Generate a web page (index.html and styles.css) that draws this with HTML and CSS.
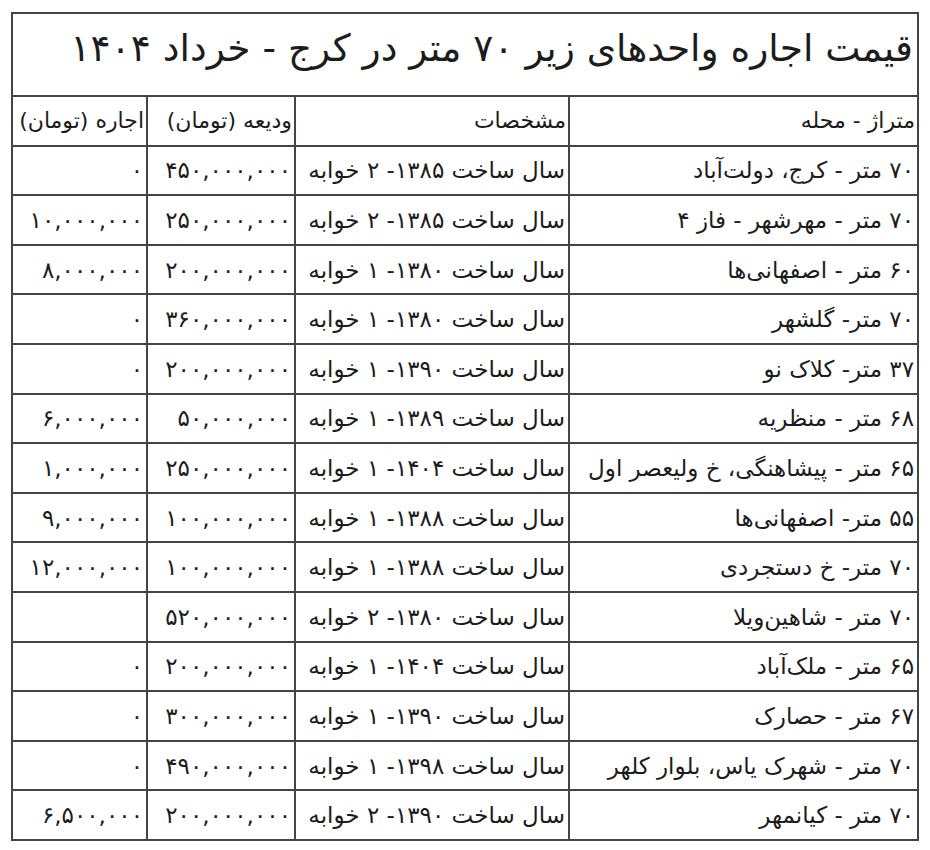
FILE: index.html
```html
<!DOCTYPE html>
<html lang="fa" dir="rtl">
<head>
<meta charset="utf-8">
<link rel="stylesheet" href="styles.css">
</head>
<body>
<table class="price-table">
  <colgroup>
    <col class="c-area">
    <col class="c-spec">
    <col class="c-dep">
    <col class="c-rent">
  </colgroup>
  <tr class="title-row"><td colspan="4" class="title">قیمت اجاره واحدهای زیر ۷۰ متر در کرج - خرداد ۱۴۰۴</td></tr>
  <tr class="head-row"><td>متراژ - محله</td><td>مشخصات</td><td>ودیعه (تومان)</td><td>اجاره (تومان)</td></tr>
  <tr><td>۷۰ متر - کرج، دولت‌آباد</td><td>سال ساخت ۱۳۸۵- ۲ خوابه</td><td>۴۵۰,۰۰۰,۰۰۰</td><td>۰</td></tr>
  <tr><td>۷۰ متر - مهرشهر - فاز ۴</td><td>سال ساخت ۱۳۸۵- ۲ خوابه</td><td>۲۵۰,۰۰۰,۰۰۰</td><td>۱۰,۰۰۰,۰۰۰</td></tr>
  <tr><td>۶۰ متر - اصفهانی‌ها</td><td>سال ساخت ۱۳۸۰- ۱ خوابه</td><td>۲۰۰,۰۰۰,۰۰۰</td><td>۸,۰۰۰,۰۰۰</td></tr>
  <tr><td>۷۰ متر- گلشهر</td><td>سال ساخت ۱۳۸۰- ۱ خوابه</td><td>۳۶۰,۰۰۰,۰۰۰</td><td>۰</td></tr>
  <tr><td>۳۷ متر- کلاک نو</td><td>سال ساخت ۱۳۹۰- ۱ خوابه</td><td>۲۰۰,۰۰۰,۰۰۰</td><td>۰</td></tr>
  <tr><td>۶۸ متر - منظریه</td><td>سال ساخت ۱۳۸۹- ۱ خوابه</td><td>۵۰,۰۰۰,۰۰۰</td><td>۶,۰۰۰,۰۰۰</td></tr>
  <tr><td>۶۵ متر - پیشاهنگی، خ ولیعصر اول</td><td>سال ساخت ۱۴۰۴- ۱ خوابه</td><td>۲۵۰,۰۰۰,۰۰۰</td><td>۱,۰۰۰,۰۰۰</td></tr>
  <tr><td>۵۵ متر- اصفهانی‌ها</td><td>سال ساخت ۱۳۸۸- ۱ خوابه</td><td>۱۰۰,۰۰۰,۰۰۰</td><td>۹,۰۰۰,۰۰۰</td></tr>
  <tr><td>۷۰ متر- خ دستجردی</td><td>سال ساخت ۱۳۸۸- ۱ خوابه</td><td>۱۰۰,۰۰۰,۰۰۰</td><td>۱۲,۰۰۰,۰۰۰</td></tr>
  <tr><td>۷۰ متر - شاهین‌ویلا</td><td>سال ساخت ۱۳۸۰- ۲ خوابه</td><td>۵۲۰,۰۰۰,۰۰۰</td><td></td></tr>
  <tr><td>۶۵ متر - ملک‌آباد</td><td>سال ساخت ۱۴۰۴- ۱ خوابه</td><td>۲۰۰,۰۰۰,۰۰۰</td><td>۰</td></tr>
  <tr><td>۶۷ متر - حصارک</td><td>سال ساخت ۱۳۹۰- ۱ خوابه</td><td>۳۰۰,۰۰۰,۰۰۰</td><td>۰</td></tr>
  <tr><td>۷۰ متر - شهرک یاس، بلوار کلهر</td><td>سال ساخت ۱۳۹۸- ۱ خوابه</td><td>۴۹۰,۰۰۰,۰۰۰</td><td>۰</td></tr>
  <tr><td>۷۰ متر - کیانمهر</td><td>سال ساخت ۱۳۹۰- ۲ خوابه</td><td>۲۰۰,۰۰۰,۰۰۰</td><td>۶,۵۰۰,۰۰۰</td></tr>
</table>
</body>
</html>
```
FILE: styles.css
```css
html, body {
  margin: 0;
  padding: 0;
  background: #fff;
}
body {
  padding: 12px 11px 0 13px;
  font-family: "DejaVu Sans", "Noto Sans", sans-serif;
  color: #1c1c1c;
}
.price-table {
  border-collapse: collapse;
  width: 906px;
  table-layout: fixed;
  margin-right: 0;
  margin-left: auto;
}
.c-area { width: 349px; }
.c-spec { width: 274px; }
.c-dep { width: 148px; }
.c-rent { width: 135px; }
.price-table td {
  border: 2px solid #444;
  height: 47.6px;
  padding: 0 3px;
  font-size: 23px;
  line-height: 46px;
  text-align: right;
  white-space: nowrap;
  overflow: hidden;
  vertical-align: middle;
}
.price-table .head-row td {
  font-size: 22px;
  padding: 0 2px;
}
.price-table .title {
  height: 77px;
  font-size: 37.5px;
  line-height: 60px;
  vertical-align: top;
  padding-top: 4px;
  padding-right: 4px;
}
```
